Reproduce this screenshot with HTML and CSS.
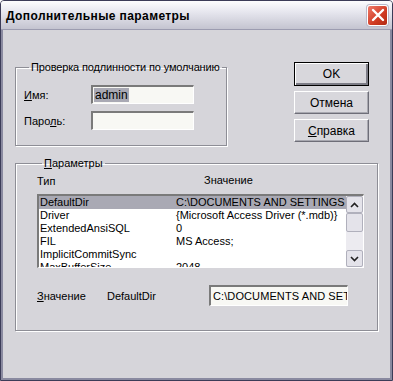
FILE: index.html
```html
<!DOCTYPE html>
<html>
<head>
    <title>Дополнительные параметры</title>
    <link rel="stylesheet" href="styles.css">
</head>
<body>
    <div class="window">
        <div class="titlebar">
            <span class="title">Дополнительные параметры</span>
            <span class="close">
                <svg width="14" height="14" viewBox="0 0 14 14">
                    <path d="M2 2 L12 12 M12 2 L2 12" stroke="#fff" stroke-width="2.4" stroke-linecap="round"/>
                </svg>
            </span>
        </div>
        <div class="client">
            <div class="top">
                <fieldset class="group auth">
                    <legend>Проверка подлинности по умолчанию</legend>
                    <div class="field">
                        <label><u>И</u>мя:</label>
                        <span class="edit"><span class="sel">admin</span></span>
                    </div>
                    <div class="field">
                        <label>Паро<u>л</u>ь:</label>
                        <span class="edit"></span>
                    </div>
                </fieldset>
                <div class="buttons">
                    <button class="default">OK</button>
                    <button>Отмена</button>
                    <button><u>С</u>правка</button>
                </div>
            </div>
            <fieldset class="group params">
                <legend><u>П</u>араметры</legend>
                <div class="heads">
                    <span class="col-type">Тип</span>
                    <span class="col-value">Значение</span>
                </div>
                <div class="list">
                    <div class="rows">
                        <div class="row selected"><span>DefaultDir</span><span>C:\DOCUMENTS AND SETTINGS</span></div>
                        <div class="row"><span>Driver</span><span>{Microsoft Access Driver (*.mdb)}</span></div>
                        <div class="row"><span>ExtendedAnsiSQL</span><span>0</span></div>
                        <div class="row"><span>FIL</span><span>MS Access;</span></div>
                        <div class="row"><span>ImplicitCommitSync</span><span></span></div>
                        <div class="row"><span>MaxBufferSize</span><span>2048</span></div>
                    </div>
                    <div class="scrollbar">
                        <span class="arrow">
                            <svg width="9" height="6" viewBox="0 0 9 6"><path d="M1 5 L4.5 1.5 L8 5" fill="none" stroke="#222" stroke-width="1.6"/></svg>
                        </span>
                        <span class="thumb"></span>
                        <span class="track"></span>
                        <span class="arrow">
                            <svg width="9" height="6" viewBox="0 0 9 6"><path d="M1 1 L4.5 4.5 L8 1" fill="none" stroke="#222" stroke-width="1.6"/></svg>
                        </span>
                    </div>
                </div>
                <div class="value-row">
                    <span class="v-label"><u>З</u>начение</span>
                    <span class="v-name">DefaultDir</span>
                    <span class="edit wide">C:\DOCUMENTS AND SET</span>
                </div>
            </fieldset>
        </div>
    </div>
</body>
</html>
```

FILE: styles.css
```css
body {
    margin: 0;
    font-family: "Liberation Sans", Arial, sans-serif;
    font-size: 11px;
    color: #000;
    background: #fff;
}

.window {
    width: 393px;
    height: 381px;
    box-sizing: border-box;
    display: flex;
    flex-direction: column;
    background: #d6d5da;
    border: 1px solid #3c3c58;
    border-radius: 4px 4px 0 0;
    overflow: hidden;
}

.titlebar {
    height: 28px;
    display: flex;
    align-items: center;
    justify-content: space-between;
    padding: 0 4px 0 5px;
    background: linear-gradient(#fdfdfe, #e6e6ee 40%, #c4c4d0);
    border-bottom: 1px solid #9c9cb0;
}

.title {
    font-weight: bold;
    font-size: 12px;
    letter-spacing: 0.4px;
    padding-top: 2px;
}

.close {
    width: 21px;
    height: 21px;
    box-sizing: border-box;
    display: flex;
    align-items: center;
    justify-content: center;
    border: 1px solid #fff;
    border-radius: 3px;
    background: linear-gradient(135deg, #ef7a6a, #d03a22 60%, #b02a14);
    box-shadow: 0 0 0 1px #b8b8c8;
}

.client {
    flex: 1;
    border-left: 2px solid #8a8aa0;
    border-right: 2px solid #8a8aa0;
    border-bottom: 2px solid #8a8aa0;
    padding: 0 21px 0 12px;
}

.top {
    display: flex;
    align-items: flex-start;
    justify-content: space-between;
}

.group {
    margin: 0;
    border: 1px solid #8e8e96;
    box-shadow: inset 1px 1px 0 #fff, 1px 1px 0 #fff;
}

.group legend {
    padding: 0 2px;
    margin-left: 5px;
    line-height: 14px;
    white-space: nowrap;
}

.auth {
    width: 212px;
    height: 86px;
    box-sizing: border-box;
    margin-top: 30px;
    padding: 11px 0 0 8px;
}

.auth legend {
    letter-spacing: -0.15px;
}

.field {
    display: flex;
    align-items: center;
    margin-bottom: 7px;
}

.field label {
    width: 67px;
}

.edit {
    display: inline-flex;
    align-items: center;
    width: 103px;
    height: 19px;
    box-sizing: border-box;
    padding-left: 1px;
    white-space: nowrap;
    overflow: hidden;
    background: #f8f8f4;
    border-top: 2px solid #7a7a7a;
    border-left: 2px solid #7a7a7a;
    border-right: 1px solid #fff;
    border-bottom: 1px solid #fff;
}

.sel {
    background: #a9a9b4;
    padding: 0 1px;
    font-size: 12px;
}

.buttons {
    display: flex;
    flex-direction: column;
    gap: 5px;
    margin-top: 32px;
}

.buttons button {
    width: 75px;
    height: 23px;
    font-family: inherit;
    font-size: 12px;
    background: #d8d7dc;
    border: 1px solid;
    border-color: #fff #6e6e78 #6e6e78 #fff;
    box-shadow: inset -1px -1px 0 #a8a8b0;
    padding: 0;
}

.buttons button.default {
    border: 1px solid #000;
    box-shadow: inset 1px 1px 0 #fff, inset -2px -2px 0 #7c7c86;
    height: 24px;
}

.params {
    width: 363px;
    height: 175px;
    box-sizing: border-box;
    margin-top: 10px;
    padding: 4px 0 0 21px;
}

.heads {
    display: flex;
    height: 20px;
    align-items: flex-start;
}

.col-type {
    width: 167px;
    padding-top: 1px;
}

.list {
    display: flex;
    width: 327px;
    height: 74px;
    box-sizing: border-box;
    background: #fff;
    border-top: 2px solid #7a7a7a;
    border-left: 2px solid #7a7a7a;
    border-right: 1px solid #fff;
    border-bottom: 1px solid #fff;
    overflow: hidden;
}

.rows {
    flex: 1;
    overflow: hidden;
}

.row {
    display: flex;
    height: 13px;
    line-height: 13px;
    white-space: nowrap;
}

.row span:first-child {
    flex: 0 0 136px;
    padding-left: 1px;
}

.row.selected {
    background: #a9a9b4;
}

.scrollbar {
    width: 17px;
    flex-shrink: 0;
    display: flex;
    flex-direction: column;
    background: #ecebf0;
}

.arrow, .thumb {
    height: 15px;
    display: flex;
    align-items: center;
    justify-content: center;
    background: #e4e3ea;
    border: 1px solid #b0b0bc;
    border-radius: 2px;
}

.thumb {
    height: 17px;
}

.track {
    flex: 1;
}

.value-row {
    display: flex;
    align-items: center;
    margin-top: 17px;
}

.v-label {
    width: 70px;
}

.v-name {
    width: 102px;
}

.edit.wide {
    width: 139px;
    height: 21px;
    padding-left: 2px;
    letter-spacing: 0.1px;
}
```
